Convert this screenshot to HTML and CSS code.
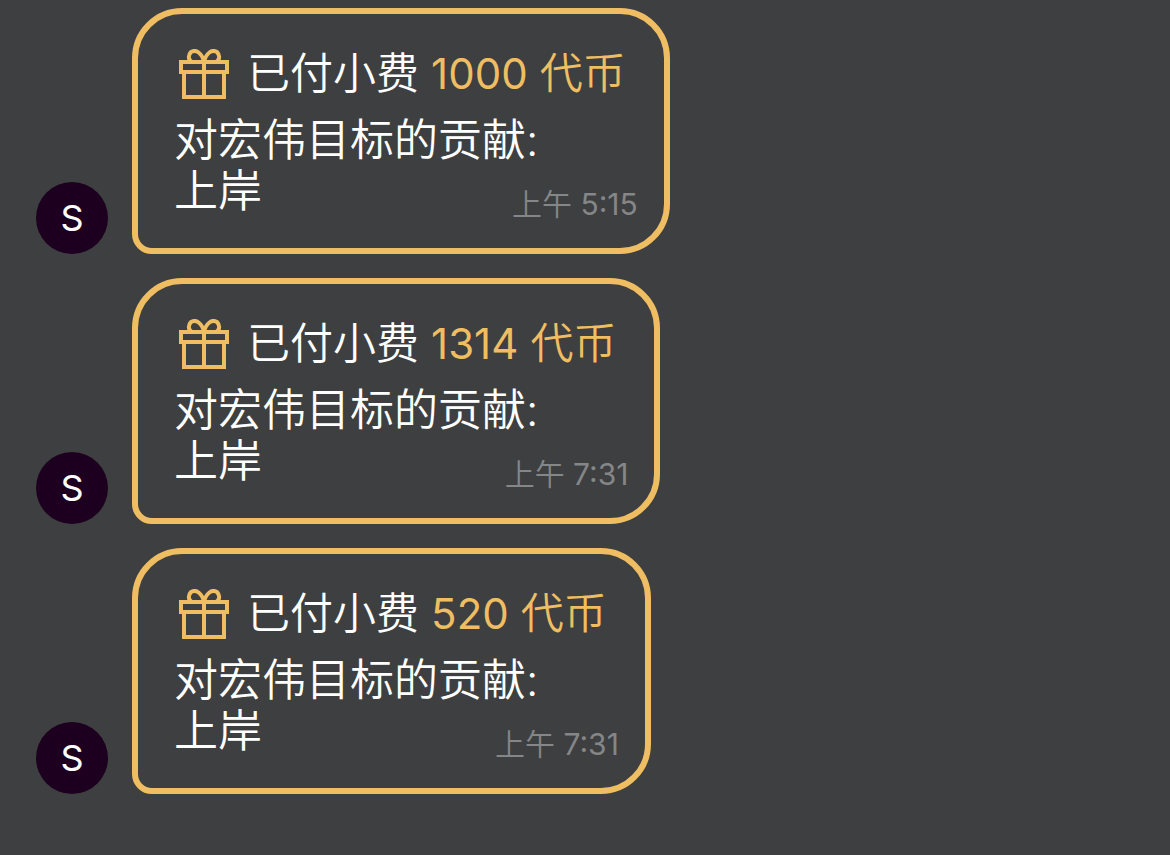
FILE: index.html
```html
<!DOCTYPE html>
<html lang="zh-hans">
<head>
    <meta charset="utf-8" />
    <meta name="viewport" content="width=device-width, initial-scale=1">
    <title>聊天</title>
    <link rel="stylesheet" href="styles.css">
</head>
<body>
    <svg class="sprite" aria-hidden="true">
        <symbol id="gift" viewBox="0 0 50 50">
            <path d="M2 13H48V23H2ZM5 23V48H45V23M25 13V48M13 13C9 11 9 6 12 3C17 0 23 4 25 13C27 4 33 0 38 3C41 6 41 11 37 13" />
        </symbol>
    </svg>

    <main class="chat">
        <div class="message">
            <div class="avatar">S</div>
            <div class="bubble">
                <div class="tip">
                    <svg class="gift-icon" aria-hidden="true"><use href="#gift" /></svg>
                    <span>已付小费 <span class="amount"><span class="number">1000</span> 代币</span></span>
                </div>
                <div class="goal">对宏伟目标的贡献:</div>
                <div class="last-line">
                    <span>上岸</span>
                    <time class="time" datetime="05:15">上午 <span class="clock">5:15</span></time>
                </div>
            </div>
        </div>

        <div class="message">
            <div class="avatar">S</div>
            <div class="bubble">
                <div class="tip">
                    <svg class="gift-icon" aria-hidden="true"><use href="#gift" /></svg>
                    <span>已付小费 <span class="amount"><span class="number">1314</span> 代币</span></span>
                </div>
                <div class="goal">对宏伟目标的贡献:</div>
                <div class="last-line">
                    <span>上岸</span>
                    <time class="time" datetime="07:31">上午 <span class="clock">7:31</span></time>
                </div>
            </div>
        </div>

        <div class="message">
            <div class="avatar">S</div>
            <div class="bubble">
                <div class="tip">
                    <svg class="gift-icon" aria-hidden="true"><use href="#gift" /></svg>
                    <span>已付小费 <span class="amount"><span class="number">520</span> 代币</span></span>
                </div>
                <div class="goal">对宏伟目标的贡献:</div>
                <div class="last-line">
                    <span>上岸</span>
                    <time class="time" datetime="07:31">上午 <span class="clock">7:31</span></time>
                </div>
            </div>
        </div>
    </main>
</body>
</html>
```

FILE: styles.css
```css
* {
    box-sizing: border-box;
}

body {
    margin: 0;
    background-color: #3e3f40;
    color: white;
    font-family: Inter, "Noto Sans CJK SC", sans-serif;
    font-size: 44px;
    font-weight: 350;
    line-height: 51px;
}

.sprite {
    display: none;
}

.chat {
    display: flex;
    flex-direction: column;
    gap: 24px;
    min-height: 100vh;
    padding: 8px 36px;
}

.message {
    display: flex;
    align-items: flex-end;
    gap: 24px;
}

.avatar {
    flex: none;
    width: 72px;
    height: 72px;
    border-radius: 50%;
    background-color: #1d0020;
    font-size: 36px;
    font-weight: 400;
    line-height: 72px;
    text-align: center;
}

.bubble {
    padding: 34px 26px 31px 36px;
    border: 6px solid #efbd62;
    border-radius: 50px 50px 50px 20px;
}

.tip {
    display: flex;
    align-items: center;
    gap: 18px;
    margin-bottom: 16px;
    padding-left: 5px;
    padding-right: 12px;
    font-size: 43px;
    white-space: nowrap;
}

.gift-icon {
    flex: none;
    width: 50px;
    height: 50px;
    fill: none;
    stroke: #efbd62;
    stroke-width: 4;
}

.amount {
    color: #efbd62;
}

.number {
    font-size: 42px;
    font-weight: 400;
}

.last-line {
    display: flex;
    justify-content: space-between;
    align-items: flex-end;
}

.time {
    color: #858688;
    font-size: 30px;
    line-height: 26px;
}

.clock {
    font-weight: 400;
}
```
